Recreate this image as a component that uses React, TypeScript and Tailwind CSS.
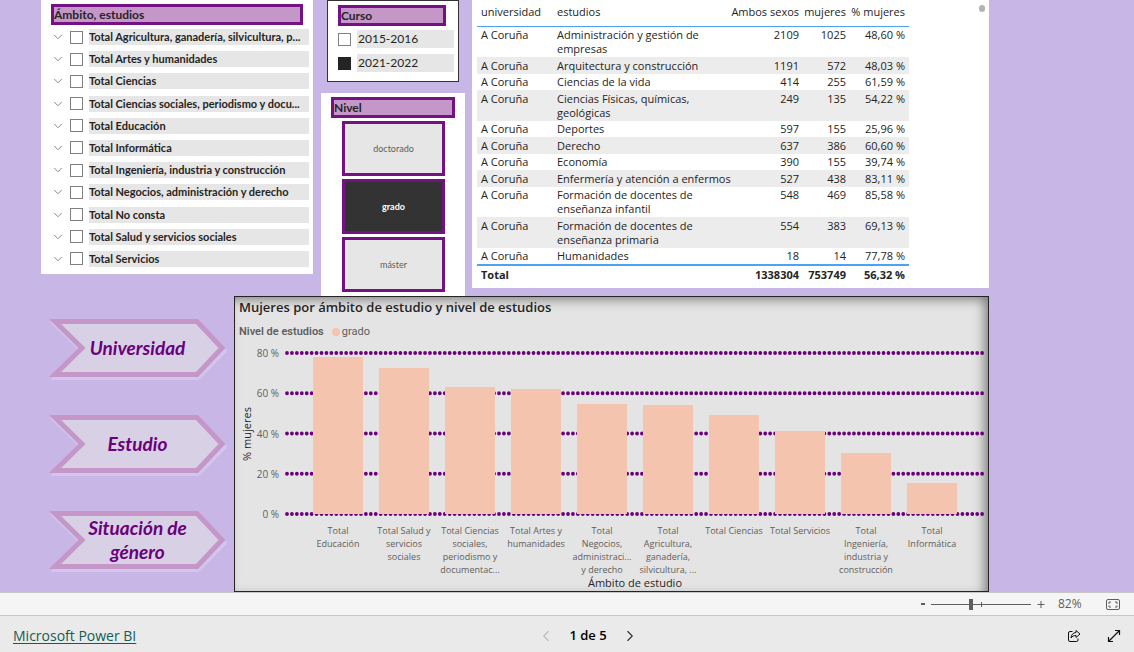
import { ChevronDown, ChevronLeft, ChevronRight } from "lucide-react";

const fields = [
	"Total Agricultura, ganadería, silvicultura, p...",
	"Total Artes y humanidades",
	"Total Ciencias",
	"Total Ciencias sociales, periodismo y docu...",
	"Total Educación",
	"Total Informática",
	"Total Ingeniería, industria y construcción",
	"Total Negocios, administración y derecho",
	"Total No consta",
	"Total Salud y servicios sociales",
	"Total Servicios",
];

const years = [
	{ label: "2015-2016", checked: false },
	{ label: "2021-2022", checked: true },
];

const levels = [
	{ label: "doctorado", active: false },
	{ label: "grado", active: true },
	{ label: "máster", active: false },
];

const rows = [
	["A Coruña", "Administración y gestión de empresas", "2109", "1025", "48,60 %"],
	["A Coruña", "Arquitectura y construcción", "1191", "572", "48,03 %"],
	["A Coruña", "Ciencias de la vida", "414", "255", "61,59 %"],
	["A Coruña", "Ciencias Físicas, químicas, geológicas", "249", "135", "54,22 %"],
	["A Coruña", "Deportes", "597", "155", "25,96 %"],
	["A Coruña", "Derecho", "637", "386", "60,60 %"],
	["A Coruña", "Economía", "390", "155", "39,74 %"],
	["A Coruña", "Enfermería y atención a enfermos", "527", "438", "83,11 %"],
	["A Coruña", "Formación de docentes de enseñanza infantil", "548", "469", "85,58 %"],
	["A Coruña", "Formación de docentes de enseñanza primaria", "554", "383", "69,13 %"],
	["A Coruña", "Humanidades", "18", "14", "77,78 %"],
];

const bars = [
	{ lines: ["Total", "Educación"], value: 78 },
	{ lines: ["Total Salud y", "servicios", "sociales"], value: 72.8 },
	{ lines: ["Total Ciencias", "sociales,", "periodismo y", "documentac..."], value: 63.3 },
	{ lines: ["Total Artes y", "humanidades"], value: 62.3 },
	{ lines: ["Total", "Negocios,", "administraci...", "y derecho"], value: 54.8 },
	{ lines: ["Total", "Agricultura,", "ganadería,", "silvicultura, ..."], value: 54.1 },
	{ lines: ["Total Ciencias"], value: 49.3 },
	{ lines: ["Total Servicios"], value: 41.1 },
	{ lines: ["Total", "Ingeniería,", "industria y", "construcción"], value: 30.5 },
	{ lines: ["Total", "Informática"], value: 15.3 },
];

const ticks = [80, 60, 40, 20, 0];

const navItems = ["Universidad", "Estudio", "Situación de género"];

const SlicerTitle = ({ children }: { children: string }) => (
	<h2 className="h-[21px] border-3 border-[#741283] bg-[#c497c8] font-['Lato',sans-serif] text-xs leading-[16px] font-bold text-[#252423]">{children}</h2>
);

const FieldSlicer = () => (
	<section className="h-[274px] w-[272px] shrink-0 bg-white pt-1 pr-1 pl-2.5">
		<div className="mr-1.5">
			<SlicerTitle>Ámbito, estudios</SlicerTitle>
		</div>
		<ul className="mt-1 flex h-[238px] flex-col justify-between">
			{fields.map((field) => (
				<li key={field} className="flex h-4 items-center">
					<button type="button" aria-label={`Expandir ${field}`} className="w-[19px] text-[#777]">
						<ChevronDown className="size-3.5" strokeWidth={1.5} />
					</button>
					<label className="flex min-w-0 flex-1 items-center gap-1.5">
						<input type="checkbox" className="size-[13px] shrink-0 appearance-none border border-[#808080] bg-white" />
						<span className="h-4 flex-1 bg-[#e6e6e6] font-['Lato',sans-serif] text-[11px] leading-4 font-bold whitespace-nowrap text-[#252423]">{field}</span>
					</label>
				</li>
			))}
		</ul>
	</section>
);

const YearSlicer = () => (
	<section className="mx-1.5 h-[82px] border border-[#333] bg-white pt-1 pr-1 pl-2.5">
		<div className="mr-2">
			<SlicerTitle>Curso</SlicerTitle>
		</div>
		<div className="mt-1 flex flex-col gap-1.5">
			{years.map(({ label, checked }) => (
				<label key={label} className="flex items-center gap-1.5">
					<input type="checkbox" defaultChecked={checked} className="size-[13px] appearance-none border border-[#808080] bg-white checked:border-[#252423] checked:bg-[#252423]" />
					<span className="h-[18px] flex-1 bg-[#e6e6e6] pl-px font-['Lato',sans-serif] text-xs leading-[18px] text-[#252423]">{label}</span>
				</label>
			))}
		</div>
	</section>
);

const LevelSlicer = () => (
	<section className="mt-[11px] h-[203px] bg-white px-2.5 pt-1">
		<SlicerTitle>Nivel</SlicerTitle>
		<div className="mt-[3px] mr-2.5 ml-[11px] flex flex-col gap-[3px]">
			{levels.map(({ label, active }) => (
				<button
					key={label}
					type="button"
					aria-pressed={active}
					className={`h-[55px] border-3 border-[#741283] font-['Lato',sans-serif] text-[9px] ${active ? "bg-[#333] font-bold text-white" : "bg-[#e6e6e6] text-[#605e5c]"}`}
				>
					{label}
				</button>
			))}
		</div>
	</section>
);

const StudiesTable = () => (
	<section className="flex h-[288px] min-w-0 flex-1 justify-between bg-white pr-1 pl-[5px]">
		<table className="w-[432px] table-fixed border-collapse self-start text-[11px] leading-[14px] text-[#252423]">
			<colgroup>
				<col className="w-[76px]" />
				<col className="w-[178px]" />
				<col className="w-[72px]" />
				<col className="w-[47px]" />
				<col className="w-[59px]" />
			</colgroup>
			<thead>
				<tr className="h-[26px] border-b border-[#4aa3f5] align-top whitespace-nowrap">
					<th className="pt-[5px] pl-1 text-left font-normal">universidad</th>
					<th className="pt-[5px] pl-1 text-left font-normal">estudios</th>
					<th className="pt-[5px] pr-1 text-right font-normal">Ambos sexos</th>
					<th className="pt-[5px] pr-1 text-right font-normal">mujeres</th>
					<th className="pt-[5px] pr-1 text-right font-normal">% mujeres</th>
				</tr>
			</thead>
			<tbody>
				{rows.map((row, index) => (
					<tr key={row[1]} className="align-top even:bg-[#ececec]">
						{row.map((cell, column) => (
							<td key={column} className={`pb-px ${index % 2 ? "pt-0.5" : "pt-px"} ${column > 1 ? "pr-1 text-right" : "pl-1"}`}>
								{cell}
							</td>
						))}
					</tr>
				))}
			</tbody>
			<tfoot>
				<tr className="border-t-2 border-[#4aa3f5] font-bold">
					<td className="pt-0.5 pl-1" colSpan={2}>Total</td>
					<td className="pt-0.5 pr-1 text-right">1338304</td>
					<td className="pt-0.5 pr-1 text-right">753749</td>
					<td className="pt-0.5 pr-1 text-right">56,32 %</td>
				</tr>
			</tfoot>
		</table>
		<span className="mt-[5px] h-[7px] w-1.5 rounded-full bg-[#b3b3b3]" />
	</section>
);

const ArrowButton = ({ label }: { label: string }) => (
	<button type="button" className="relative flex h-[58px] w-full items-center justify-center">
		<svg className="absolute inset-0 size-full overflow-visible" viewBox="0 0 177 58" preserveAspectRatio="none">
			<path d="M6 2.5H148L174 29L148 55.5H6L33 29Z" className="fill-none stroke-white/20 stroke-[5]" transform="translate(1 3)" />
			<path d="M6 2.5H148L173 29L148 55.5H6L33 29Z" className="fill-[#d8d1e6] stroke-[#c497c8] stroke-[5]" />
		</svg>
		<span className="relative w-[110px] text-center font-['Lato',sans-serif] text-[19px] leading-6 font-bold text-[#6b007b] italic">{label}</span>
	</button>
);

const Chart = () => (
	<section className="h-[296px] min-w-0 flex-1 border border-[#252423] bg-[#e4e4e4] pr-[3px] pl-1 shadow-[inset_-5px_4px_12px_-2px_#777]">
		<h2 className="pt-px text-[13px] leading-[18px] font-semibold text-[#252423]">Mujeres por ámbito de estudio y nivel de estudios</h2>
		<div className="mt-[9px] flex items-center font-['Roboto',sans-serif] text-[11px] leading-[14px] text-[#605e5c]">
			<span className="font-semibold">Nivel de estudios</span>
			<span className="mr-0.5 ml-2 size-2 rounded-full bg-[#f4c4ae]" />
			<span>grado</span>
		</div>
		<div className="mt-3.5 flex">
			<div className="flex h-[161px] w-4 items-center justify-center">
				<span className="-rotate-90 text-[11px] leading-4 whitespace-nowrap text-[#252423]">% mujeres</span>
			</div>
			<div className="-my-1.5 mr-1.5 flex h-[173px] w-6 flex-col justify-between text-right text-[10px] leading-3 whitespace-nowrap text-[#605e5c]">
				{ticks.map((tick) => (
					<span key={tick}>{tick} %</span>
				))}
			</div>
			<div className="relative h-[161px] flex-1">
				<svg className="absolute inset-0 size-full overflow-visible">
					{ticks.map((tick) => (
						<line key={tick} x1="2" x2="100%" y1={`${100 - tick * 1.25}%`} y2={`${100 - tick * 1.25}%`} stroke="#6b007b" strokeWidth="3.8" strokeLinecap="round" strokeDasharray="0 4.93" />
					))}
				</svg>
				<div className="relative flex h-full items-end px-5">
					{bars.map(({ lines, value }) => (
						<div key={lines.join(" ")} className="flex h-full flex-1 items-end px-2">
							<div className="w-full bg-[#f4c4ae]" style={{ height: `${value * 1.25}%` }} />
						</div>
					))}
				</div>
			</div>
		</div>
		<div className="mt-2.5 ml-[46px] flex h-[52px] px-5">
			{bars.map(({ lines }) => (
				<div key={lines.join(" ")} className="flex flex-1 flex-col items-center text-[9px] leading-[13px] text-[#605e5c]">
					{lines.map((line) => (
						<span key={line} className="whitespace-nowrap">{line}</span>
					))}
				</div>
			))}
		</div>
		<p className="ml-[46px] text-center text-[11px] leading-[14px] text-[#252423]">Ámbito de estudio</p>
	</section>
);

const ZoomBar = () => (
	<div className="flex h-[23px] items-center justify-end border-t border-[#c8c6c4] bg-[#f5f5f5] pr-3.5 text-[#605e5c]">
		<button type="button" aria-label="Alejar" className="mr-1.5 flex h-4 w-1 items-center">
			<span className="h-0.5 w-full bg-[#605e5c]" />
		</button>
		<div className="relative flex h-3 w-[100px] items-center">
			<span className="absolute top-1 left-[50px] h-[5px] w-px bg-[#605e5c]" />
			<input
				type="range"
				aria-label="Zoom"
				min={0}
				max={100}
				defaultValue={40}
				className="relative h-3 w-full appearance-none bg-transparent [&::-webkit-slider-runnable-track]:h-px [&::-webkit-slider-runnable-track]:bg-[#605e5c] [&::-webkit-slider-thumb]:mt-[-5px] [&::-webkit-slider-thumb]:h-[11px] [&::-webkit-slider-thumb]:w-1 [&::-webkit-slider-thumb]:appearance-none [&::-webkit-slider-thumb]:bg-[#605e5c]"
			/>
		</div>
		<button type="button" aria-label="Acercar" className="ml-1.5">
			<svg className="size-2" viewBox="0 0 8 8" stroke="currentColor">
				<path d="M0.5 4.5H7.5M4 1V8" />
			</svg>
		</button>
		<span className="ml-[13px] w-9 text-xs">82%</span>
		<button type="button" aria-label="Ajustar a la página" className="ml-3">
			<svg className="h-[11px] w-3.5" viewBox="0 0 14 11" fill="none" stroke="currentColor">
				<rect x="0.5" y="0.5" width="13" height="10" rx="1.5" />
				<path d="M5 3H3V5M9 3H11V5M3 6.5V8H5M11 6.5V8H9" />
			</svg>
		</button>
	</div>
);

const Footer = () => (
	<footer className="grid h-[37px] grid-cols-[1fr_auto_1fr] items-center border-t border-[#c8c6c4] bg-[#eaeaea] pt-[3px] pr-[13px] pl-[13px]">
		<a href="#" className="justify-self-start text-sm text-[#135d54] underline underline-offset-2">Microsoft Power BI</a>
		<nav aria-label="Páginas" className="ml-[42px] flex items-center gap-3.5">
			<button type="button" aria-label="Página anterior" className="text-[#bbb]">
				<ChevronLeft className="size-[18px]" strokeWidth={1.5} />
			</button>
			<span className="text-[13px] font-semibold text-black">1 de 5</span>
			<button type="button" aria-label="Página siguiente" className="text-[#333]">
				<ChevronRight className="size-[18px]" strokeWidth={1.5} />
			</button>
		</nav>
		<div className="flex items-center gap-[26px] justify-self-end text-[#111]">
			<button type="button" aria-label="Compartir">
				<svg className="size-3.5" viewBox="0 0 14 14" fill="none" stroke="currentColor" strokeLinejoin="round">
					<path d="M5.5 2.5H3A1.5 1.5 0 0 0 1.500 4V11A1.5 1.5 0 0 0 3 12.5H9.500A1.5 1.5 0 0 0 11 11V9.5" />
					<path d="M9 1.5L13 5L9 8.5V6.5C6.5 6.5 5 7.5 4 9C4.2 6 6 3.7 9 3.5Z" />
				</svg>
			</button>
			<button type="button" aria-label="Pantalla completa">
				<svg className="size-3.5" viewBox="0 0 14 14" fill="none" stroke="currentColor" strokeWidth="1.2">
					<path d="M1.5 12.5L12.5 1.5M8 1.5H12.5V6M1.5 8V12.5H6" />
				</svg>
			</button>
		</div>
	</footer>
);

export default function App() {
	return (
		<div className="font-['Open_Sans','Noto_Sans',sans-serif]">
			<main className="bg-[#c8b7e6] pr-[145px] pl-[41px]">
				<div className="flex">
					<FieldSlicer />
					<div className="mr-[7px] ml-2 w-36 shrink-0">
						<YearSlicer />
						<LevelSlicer />
					</div>
					<StudiesTable />
				</div>
				<div className="flex">
					<nav aria-label="Secciones" className="mt-[23px] mr-2 ml-2 flex w-[177px] shrink-0 flex-col gap-[38px]">
						{navItems.map((item) => (
							<ArrowButton key={item} label={item} />
						))}
					</nav>
					<Chart />
				</div>
			</main>
			<ZoomBar />
			<Footer />
		</div>
	);
}
